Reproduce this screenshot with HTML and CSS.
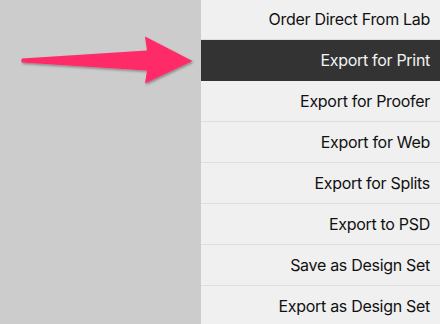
FILE: index.html
```html
<!DOCTYPE html>
<html lang="en">
	<head>
		<meta charset="utf-8">

		<title>Export menu</title>

		<link rel="stylesheet" href="styles.css">
	</head>
	<body>
	<div class="screen">
		<div class="backdrop"></div>

		<ul class="menu">
			<li>Order Direct From Lab</li>
			<li class="active">Export for Print</li>
			<li>Export for Proofer</li>
			<li>Export for Web</li>
			<li>Export for Splits</li>
			<li>Export to PSD</li>
			<li>Save as Design Set</li>
			<li>Export as Design Set</li>
		</ul>

		<!-- callout arrow pointing at the active item -->
		<svg class="arrow" width="200" height="100" viewBox="0 0 200 100">
			<defs>
				<filter id="shade" x="-10%" y="-20%" width="130%" height="150%">
					<feDropShadow dx="1" dy="1.5" stdDeviation="1" flood-color="#000" flood-opacity="0.35"/>
				</filter>
			</defs>
			<path d="M22 58.5 L147 50.5 L145 36.5 L192.5 61 L145 83.5 L147 70.5 L22 62.5 Q20.5 60.5 22 58.5 Z"
				fill="#ff2a68" filter="url(#shade)"/>
		</svg>
	</div>
	</body>
</html>
```

FILE: styles.css
```css
body {
	margin: 0;
	background: #cccccc;
	font-family: Inter, Roboto, "Liberation Sans", sans-serif;
}

div.screen
{
	position: relative;
	display: flex;
	width: 440px;
	height: 324px;
	overflow: hidden;
}

div.backdrop {
	flex: 0 0 201px;
	background: #cccccc;
}

ul.menu {
	flex: 1;
	margin: 0;
	padding: 0;
	list-style: none;
	background: #f0f0f0;
}

ul.menu li {
	height: 40px;
	margin: 0;
	padding-right: 10px;
	border-bottom: 1px solid #dedede;

	color: #111111;
	font-size: 16px;
	letter-spacing: -0.3px;
	line-height: 40px;
	text-align: right;
}

ul.menu li:first-child {
	margin-top: -1px;
}

ul.menu li.active {
	background: #333333;
	border-bottom-color: #333333;
	color: #f4f4f4;
}

svg.arrow {
	/* floats over the backdrop and the menu edge */
	position: absolute;
	left: 0;
	top: 0;
}
```
